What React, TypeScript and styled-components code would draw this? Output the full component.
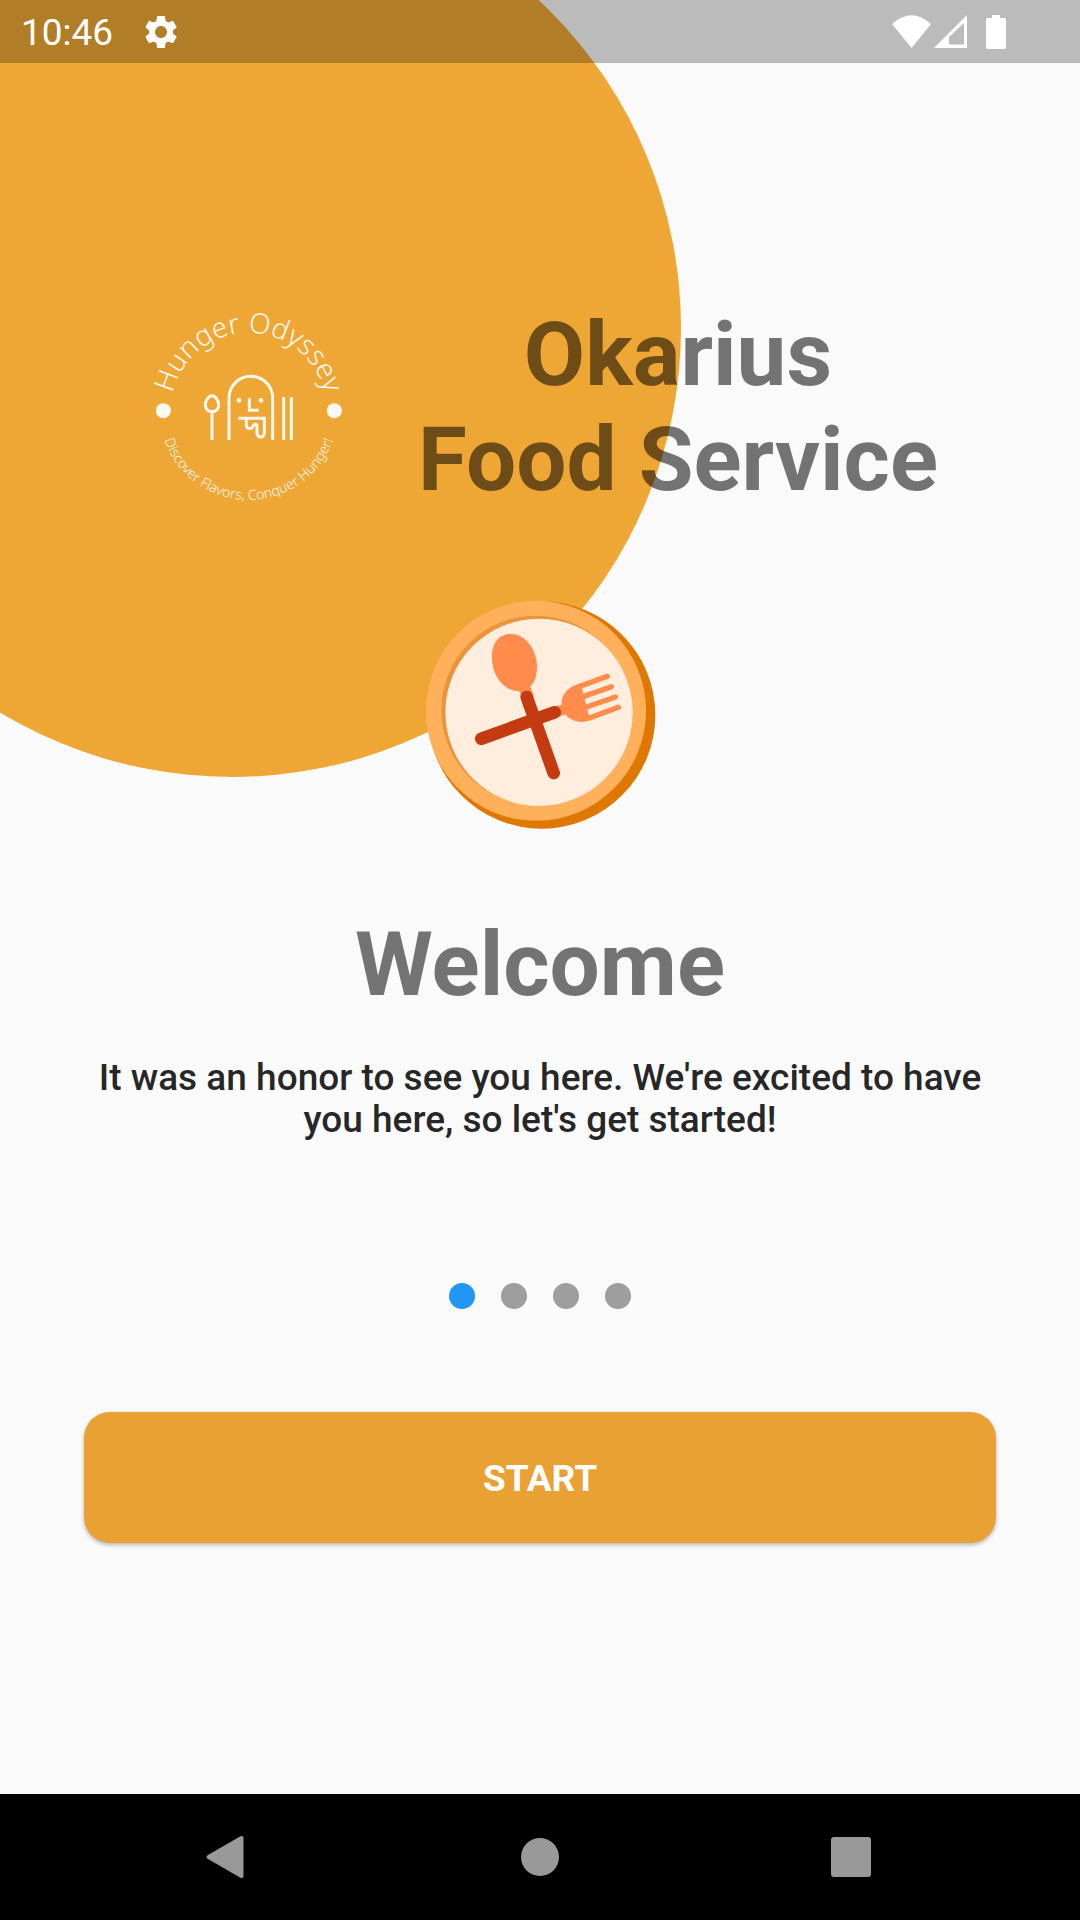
import React from "react";
import styled, { createGlobalStyle } from "styled-components";
import { MdSettings } from "react-icons/md";

const GlobalStyle = createGlobalStyle`
  * { box-sizing: border-box; }
  body {
    margin: 0;
    background: #fafafa;
    font-family: Roboto, "Noto Sans", sans-serif;
  }
`;

const Screen = styled.div`
  position: relative;
  isolation: isolate;
  overflow: hidden;
  min-height: 100vh;
  display: flex;
  flex-direction: column;
  background: #fafafa;
`;

const Backdrop = styled.div`
  position: absolute;
  z-index: -1;
  top: -121px;
  left: -217px;
  width: 898px;
  height: 898px;
  border-radius: 50%;
  background: #eea734;
`;

const StatusBar = styled.header`
  display: flex;
  align-items: center;
  justify-content: space-between;
  height: 63px;
  padding: 0 72px 0 21px;
  background: rgba(0, 0, 0, 0.25);
  color: #fff;
`;

const StatusGroup = styled.div`
  display: flex;
  align-items: center;
  gap: 28px;
`;

const Clock = styled.time`
  font-size: 37px;
  line-height: 42px;
  padding-top: 2px;
`;

const Main = styled.main`
  flex: 1;
  display: flex;
  flex-direction: column;
  align-items: center;
  padding: 234px 84px 0;
  text-align: center;
`;

const Brand = styled.div`
  display: flex;
  flex-wrap: wrap;
  align-items: center;
  justify-content: center;
  gap: 56px;
`;

const Plate = styled.svg`
  display: block;
  margin: 73px 0 72px;
`;

const heading = `
  margin: 0;
  font-size: 89px;
  line-height: 105px;
  font-weight: 700;
  color: rgba(0, 0, 0, 0.54);
`;

const BrandName = styled.h1`${heading}`;
const Welcome = styled.h2`${heading}`;

const Message = styled.p`
  margin: 40px 0 0;
  font-size: 37px;
  line-height: 42px;
  font-weight: 500;
  color: rgba(0, 0, 0, 0.87);
`;

const Pager = styled.div`
  display: flex;
  gap: 26px;
  margin: 142px 0 103px;
`;

const Dot = styled.button<{ $active: boolean }>`
  width: 26px;
  height: 26px;
  padding: 0;
  border: 0;
  border-radius: 50%;
  background: ${(p) => (p.$active ? "#2196f3" : "#9e9e9e")};
`;

const StartButton = styled.button`
  width: 100%;
  height: 131px;
  padding: 2px 0 0;
  border: 0;
  border-radius: 26px;
  background: #e8a132;
  box-shadow: 0 2px 4px rgba(0, 0, 0, 0.28);
  color: #fff;
  font-family: inherit;
  font-size: 37px;
  line-height: 42px;
  font-weight: 700;
`;

const NavBar = styled.nav`
  display: flex;
  align-items: center;
  justify-content: center;
  gap: 264px;
  height: 126px;
  background: #000;
`;

const NavButton = styled.button`
  display: flex;
  width: 48px;
  height: 48px;
  padding: 0;
  border: 0;
  background: none;
`;

const CurvedTitle = styled.text`
  font-family: "Noto Sans", "Open Sans", sans-serif;
  font-size: 84px;
  font-weight: 300;
`;

const CurvedTagline = styled(CurvedTitle)`
  font-size: 42px;
`;

function StatusIcons() {
  return (
    <svg width="116" height="36" viewBox="0 0 116 36" fill="#fff" aria-hidden="true">
      <path d="M0 10Q19.500 -7.500 39 10L19.500 34Z" />
      <path fillRule="evenodd" d="M42 34L75 1V34ZM57 23V30.500H72V9Z" />
      <path d="M100 1H108V4H112Q114 4 114 6V33Q114 35 112 35H96Q94 35 94 33V6Q94 4 96 4H100Z" />
    </svg>
  );
}

function Logo() {
  return (
    <svg width="220" height="220" viewBox="6 -9 660 660" fill="#fbf8f2" role="img" aria-label="Hunger Odyssey">
      <defs>
        <path id="arc-top" d="M92 332A234 234 0 0 1 560 332" />
        <path id="arc-bottom" d="M58 332A268 268 0 0 0 594 332" />
      </defs>
      <CurvedTitle textAnchor="middle">
        <textPath href="#arc-top" startOffset="50%">Hunger Odyssey</textPath>
      </CurvedTitle>
      <CurvedTagline textAnchor="middle">
        <textPath href="#arc-bottom" startOffset="50%">Discover Flavors, Conquer Hunger!</textPath>
      </CurvedTagline>
      <circle cx="70" cy="332" r="22.500" />
      <circle cx="583" cy="332" r="22.500" />
      <circle cx="297" cy="301" r="7" />
      <circle cx="363" cy="301" r="7" />
      <g fill="none" stroke="#fbf8f2" strokeWidth="9">
        <path d="M216 287C228 287 236 304 236 315C236 327 228 335 216 335C204 335 196 327 196 315C196 304 204 287 216 287ZM216 335V420" />
        <path d="M267 420V294A65.500 65 0 0 1 398 294V420" />
        <path d="M328 295V331H356" />
        <path d="M295 355H373V400C373 415 351 415 351 400V380C351 370 343 370 339 379C334 389 319 388 319 374V355" />
        <path d="M431 291V420M454 291V420" />
      </g>
    </svg>
  );
}

function PlateArt() {
  return (
    <Plate width="260" height="250" viewBox="0 0 780 750" role="img" aria-label="Plate with spoon and fork">
      <circle cx="395" cy="375" r="341" fill="#df7800" />
      <circle cx="378" cy="362.500" r="330" fill="#ffb05b" />
      <circle cx="377" cy="360" r="283" fill="#e9933a" />
      <circle cx="387" cy="367" r="281" fill="#ffeede" />
      <path d="M325 292L358 281L372 320L336 326Z" fill="#f98b4b" />
      <path d="M432 352L470 340L480 368L442 382Z" fill="#f98b4b" />
      <path d="M248 225C238 170 262 132 300 132C346 132 372 172 380 214C386 266 364 300 332 304C288 306 256 268 248 225Z" fill="#ff8c4c" />
      <path d="M500 284C470 293 453 318 455 343C458 380 492 403 530 394L540 391L512 279Z" fill="#ff8c4c" />
      <path d="M506 290L592 259M518 320L604 290M530 351L616 321M540 383L625 352" stroke="#ff8c4c" strokeWidth="16" strokeLinecap="round" />
      <path d="M350 321L431 549M214 446L434 367" stroke="#c43a11" strokeWidth="38" strokeLinecap="round" />
    </Plate>
  );
}

export default function App() {
  const [page, setPage] = React.useState(0);
  return (
    <Screen>
      <GlobalStyle />
      <Backdrop />
      <StatusBar>
        <StatusGroup>
          <Clock>10:46</Clock>
          <MdSettings size={40} aria-hidden="true" />
        </StatusGroup>
        <StatusIcons />
      </StatusBar>
      <Main>
        <Brand>
          <Logo />
          <BrandName>
            Okarius
            <br />
            Food Service
          </BrandName>
        </Brand>
        <PlateArt />
        <Welcome>Welcome</Welcome>
        <Message>
          It was an honor to see you here. We're excited to have you here, so let's get started!
        </Message>
        <Pager>
          {[0, 1, 2, 3].map((i) => (
            <Dot key={i} type="button" $active={i === page} aria-label={`Page ${i + 1}`} onClick={() => setPage(i)} />
          ))}
        </Pager>
        <StartButton type="button">START</StartButton>
      </Main>
      <NavBar>
        <NavButton type="button" aria-label="Back">
          <svg width="48" height="48" viewBox="0 0 48 48" fill="#999">
            <path d="M4 22L36 3.500Q39.500 2 39.500 5V43Q39.500 46 36 44.500L4 26Q1 24 4 22Z" />
          </svg>
        </NavButton>
        <NavButton type="button" aria-label="Home">
          <svg width="48" height="48" viewBox="0 0 48 48" fill="#999">
            <circle cx="24" cy="24" r="19" />
          </svg>
        </NavButton>
        <NavButton type="button" aria-label="Recent apps">
          <svg width="48" height="48" viewBox="0 0 48 48" fill="#999">
            <rect x="3" y="4" width="40" height="40" rx="3" />
          </svg>
        </NavButton>
      </NavBar>
    </Screen>
  );
}
